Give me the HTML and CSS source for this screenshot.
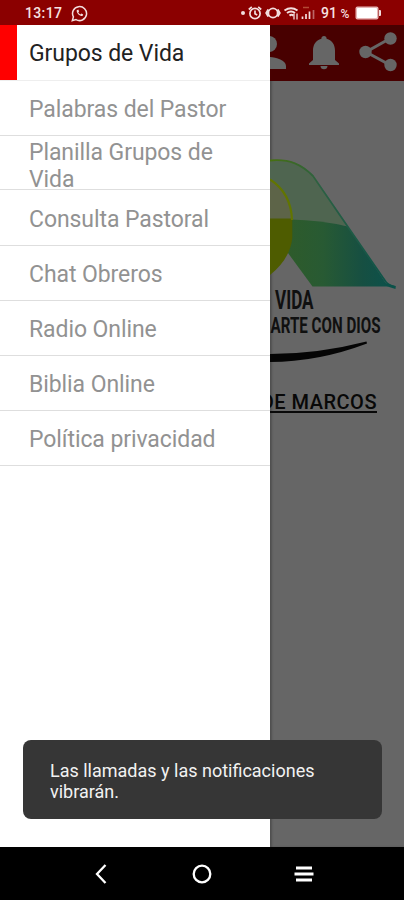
FILE: index.html
```html
<!DOCTYPE html>
<html lang="es">
<head>
    <meta charset="UTF-8">
    <meta name="viewport" content="width=device-width, initial-scale=1.0">
    <title>Grupos de Vida</title>
    <link rel="stylesheet" href="styles.css">
</head>
<body>
    <div class="phone">
        <div class="status-bar">
            <span class="time">13:17</span>
            <svg class="whatsapp" width="17" height="17" viewBox="0 0 17 17" fill="none" stroke="#f3dede" stroke-width="1.5">
                <path d="M1.3 15.7l1.1-3.8A7 7 0 1 1 5 14.6z"/>
                <path d="M5.7 5.2c-.4 2.8 2.8 6.1 5.8 5.9l.7-1.5-1.8-1-1 .9C8.3 9 7.7 8.2 7.3 7.3l.8-.9-.8-1.8z" fill="#f3dede" stroke="none"/>
            </svg>
            <svg class="status-icons" width="76" height="20" viewBox="0 0 76 20" fill="none" stroke="#f3dede" stroke-width="1.7">
                <circle cx="2" cy="10" r="2" fill="#f3dede" stroke="none"/>
                <circle cx="14" cy="10.5" r="5.1"/>
                <path d="M14 7.5v3.300l2.200 1.300M7.800 6.500l3-2.700M20.200 6.500l-3-2.700"/>
                <circle cx="32" cy="10" r="4.6"/>
                <path d="M27.500 6.500L25.500 10l2 3.500M36.500 6.500l2 3.500-2 3.500" stroke-width="2.400"/>
                <path d="M43.500 7.500q6.500-4.500 13 0M46 10q4-3 8 0M48.500 12.600q2-1.600 4 0" stroke-width="2"/>
                <path d="M53 10.500v6m3-6v6" stroke-width="1.300"/>
                <path d="M61.500 16v-2.500M65 16v-5M68.500 16V8.500"/>
                <path d="M72.500 16V7" stroke="#b66"/>
                <path d="M62 4.500h6" stroke="#b44a35" stroke-width="1.500"/>
            </svg>
            <span class="percent">91 <small>%</small></span>
            <svg class="battery" width="27" height="14" viewBox="0 0 27 14">
                <rect x="0.500" y="0.500" width="23" height="13" rx="2" fill="#e6b5b5"/>
                <rect x="2" y="2" width="20" height="10" rx="1" fill="#fff"/>
                <path d="M24 4h1q1 0 1 1v4q0 1-1 1h-1z" fill="#f3dede"/>
            </svg>
        </div>

        <div class="screen">
            <ul class="drawer">
                <li class="active">Grupos de Vida</li>
                <li>Palabras del Pastor</li>
                <li class="two-lines">Planilla Grupos de Vida</li>
                <li class="tall">Consulta Pastoral</li>
                <li>Chat Obreros</li>
                <li>Radio Online</li>
                <li>Biblia Online</li>
                <li>Política privacidad</li>
            </ul>

            <div class="content">
                <div class="toolbar">
                    <svg width="134" height="56" viewBox="0 0 134 56" fill="#666">
                        <circle cx="-1" cy="19" r="8"/>
                        <path d="M-17 44v-3c0-6 10-9 16-9s17 3 17 9v3z"/>
                        <path d="M54 11c1.600 0 2.600 1 2.600 2.700C62.500 15.500 65 20 65 25.500V35l4 3.500V40H39v-1.500l4-3.500v-9.500c0-5.500 2.500-10 8.400-11.800 0-1.700 1-2.700 2.600-2.700z"/>
                        <path d="M50.500 41h7c0 2-1.400 3.300-3.500 3.300s-3.500-1.300-3.500-3.300z"/>
                        <path d="M120 13.500L96 27l24 13" fill="none" stroke="#666" stroke-width="3"/>
                        <circle cx="120.500" cy="13.500" r="6.200"/>
                        <circle cx="95.500" cy="27" r="6.200"/>
                        <circle cx="120.500" cy="40" r="6.200"/>
                    </svg>
                </div>
                <svg class="logo" width="134" height="300" viewBox="270 81 134 300">
                    <defs>
                        <linearGradient id="hill" x1="0" x2="1">
                            <stop offset="0" stop-color="#2e5b2b"/>
                            <stop offset="0.35" stop-color="#285a33"/>
                            <stop offset="0.75" stop-color="#164f42"/>
                            <stop offset="1" stop-color="#0d514a"/>
                        </linearGradient>
                        <linearGradient id="edge" x1="0" x2="1">
                            <stop offset="0" stop-color="#47700f"/>
                            <stop offset="0.4" stop-color="#2c6043"/>
                            <stop offset="1" stop-color="#0b5149"/>
                        </linearGradient>
                    </defs>
                    <path d="M270 160C291 158 302 165 312 174L348 226 293 220 270 216z" fill="#4f6550"/>
                    <path d="M291 219.500Q320 220 348 226.500L388 286.500H312.500L288 253z" fill="url(#hill)"/>
                    <path d="M270 179Q289 192 292 219H270z" fill="#5d6448"/>
                    <path d="M270 218.500h22.300V238Q290 259 270 275z" fill="#4e5c00"/>
                    <path d="M270 179.500Q291 193 292 220" fill="none" stroke="#627500" stroke-width="2.200"/>
                    <path d="M270 160.500C290 158.500 302 165 313 176L348 227 386 282Q388 285 395.500 287" fill="none" stroke="url(#edge)" stroke-width="1.800"/>
                    <path d="M384 283l11.500 3v3l-8-2.500z" fill="#0b5149"/>
                    <text class="logo-text"><tspan x="275" y="309" font-size="25" textLength="38.500" lengthAdjust="spacingAndGlyphs">VIDA</tspan><tspan x="270.500" y="333" font-size="22.500" textLength="110" lengthAdjust="spacingAndGlyphs">ARTE CON DIOS</tspan></text>
                    <path d="M270 354Q318 354 366.500 341.500L367 343.500Q318 362 270 362z" fill="#050505"/>
                </svg>
                <div class="subtitle">DE MARCOS</div>
            </div>

            <div class="toast">Las llamadas y las notificaciones vibrarán.</div>
        </div>

        <div class="nav-bar">
            <svg width="12" height="20" viewBox="0 0 12 20" fill="none" stroke="#fff" stroke-width="2.300">
                <path d="M10.500 1L2 10l8.500 9"/>
            </svg>
            <svg class="home" width="20" height="20" viewBox="0 0 20 20" fill="none" stroke="#fff" stroke-width="2.300">
                <circle cx="10" cy="10" r="8.300"/>
            </svg>
            <svg width="20" height="20" viewBox="0 0 20 20" fill="none" stroke="#fff" stroke-width="2.900">
                <path d="M2 4h16M0.500 10h19M2 16h16"/>
            </svg>
        </div>
    </div>
</body>
</html>
```

FILE: styles.css
```css
* {
    box-sizing: border-box;
    margin: 0;
    padding: 0;
}

body {
    font-family: Roboto, "Liberation Sans", sans-serif;
    background: #000;
}

svg {
    display: block;
    flex-shrink: 0;
}

.phone {
    display: flex;
    flex-direction: column;
    width: 404px;
    height: 900px;
    overflow: hidden;
}

.status-bar {
    display: flex;
    align-items: center;
    height: 25px;
    padding: 1px 22px 0 25px;
    background: #8b0000;
    color: #f6e2e2;
}

.time {
    width: 46px;
    font-size: 14px;
    font-weight: 500;
    letter-spacing: 0.35px;
}

.status-icons {
    margin-left: auto;
}

.percent {
    width: 37px;
    margin-left: 4px;
    font-size: 14px;
    font-weight: 500;
    white-space: nowrap;
}

.percent small {
    font-size: 12px;
}

.battery {
    margin-left: -3px;
}

.screen {
    position: relative;
    display: flex;
    height: 822px;
}

.drawer {
    width: 270px;
    list-style: none;
    background: #fff;
}

.drawer li {
    display: flex;
    align-items: center;
    height: 55px;
    padding: 3px 30px 0 29px;
    border-bottom: 1px solid #dedede;
    color: #929292;
    font-size: 23px;
    line-height: 27px;
    letter-spacing: -0.08px;
}

.drawer .active {
    height: 56px;
    padding-top: 2px;
    border-bottom-color: #eee;
    background: linear-gradient(to right, #f00 17px, #fff 17px);
    background-clip: padding-box;
    color: #222;
}

.drawer .two-lines {
    height: 54px;
    align-items: flex-start;
}

.drawer .tall {
    height: 56px;
}

.content {
    width: 134px;
    overflow: hidden;
    background: #666;
    box-shadow: inset 2px 0 2px #505050;
}

.toolbar {
    height: 56px;
    background: #480000;
}

.logo-text {
    font-family: Roboto, "Liberation Sans", sans-serif;
    font-weight: 700;
    fill: #101010;
}

.subtitle {
    display: flex;
    justify-content: flex-end;
    margin-top: 9px;
    padding-right: 27px;
    color: #080808;
    font-size: 20px;
    font-weight: 500;
    line-height: 24px;
    letter-spacing: 0.5px;
    white-space: nowrap;
    text-decoration: underline;
    text-decoration-thickness: 1.5px;
    text-underline-offset: 2px;
}

.toast {
    position: absolute;
    left: 23px;
    bottom: 28px;
    width: 359px;
    height: 79px;
    padding: 20px 50px 0 27px;
    border-radius: 8px;
    background: #363636;
    color: #f2f2f2;
    font-size: 18px;
    line-height: 21px;
}

.nav-bar {
    display: flex;
    align-items: center;
    justify-content: space-between;
    height: 53px;
    padding: 0 90px 0 95px;
    background: #000;
}

.home {
    margin-left: 3px;
}
```
